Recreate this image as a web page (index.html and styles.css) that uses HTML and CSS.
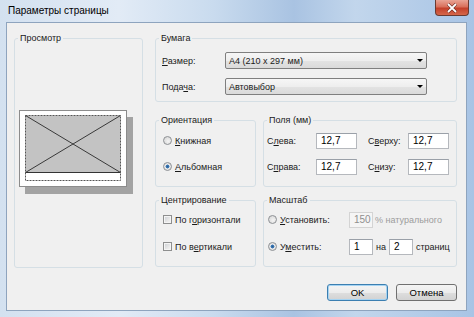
FILE: index.html
```html
<!DOCTYPE html>
<html>
<head>
  <meta charset="UTF-8">
  <title>Параметры страницы</title>
  <link rel="stylesheet" href="styles.css">
</head>
<body>
  <div class="window">
    <div class="titlebar">
      <span class="title">Параметры страницы</span>
      <span class="close">
        <svg width="12" height="10" viewBox="0 0 12 10">
          <path d="M2 1 L10 9 M10 1 L2 9" stroke="#5a2018" stroke-width="3"/>
          <path d="M2 1 L10 9 M10 1 L2 9" stroke="#fff" stroke-width="1.8"/>
        </svg>
      </span>
    </div>

    <div class="client">
      <div class="main">
        <fieldset class="group preview">
          <legend>Просмотр</legend>
          <div class="preview-body">
            <svg width="116" height="84" viewBox="0 0 116 84">
              <rect x="6" y="7" width="108" height="77" fill="#a3a3a3"/>
              <rect x="0.5" y="0.5" width="107" height="76" fill="#fff" stroke="#8c8c8c"/>
              <rect x="6.5" y="5.5" width="95" height="57" fill="#c3c3c3"/>
              <path d="M6.5 62.5 H101.5" stroke="#333"/>
              <path d="M6.5 5.5 L101.5 62.5 M101.5 5.5 L6.5 62.5" stroke="#3a3a3a"/>
              <rect x="6.5" y="5.5" width="95" height="65" fill="none" stroke="#555" stroke-dasharray="2 1"/>
            </svg>
          </div>
        </fieldset>

        <div class="right">
          <fieldset class="group paper">
            <legend>Бумага</legend>
            <div class="paper-body">
              <div class="field-row">
                <span class="label"><u>Р</u>азмер:</span>
                <div class="combo">A4 (210 x 297 мм)</div>
              </div>
              <div class="field-row">
                <span class="label">Пода<u>ч</u>а:</span>
                <div class="combo">Автовыбор</div>
              </div>
            </div>
          </fieldset>

          <div class="pair top-pair">
            <fieldset class="group narrow">
              <legend>Ориентация</legend>
              <div class="opt-body">
                <div class="opt-row"><span class="radio"></span><span><u>К</u>нижная</span></div>
                <div class="opt-row"><span class="radio checked"></span><span><u>А</u>льбомная</span></div>
              </div>
            </fieldset>
            <fieldset class="group wide">
              <legend>Поля (мм)</legend>
              <div class="margins-body">
                <span>С<u>л</u>ева:</span>
                <input class="edit" type="text" value="12,7">
                <span>С<u>в</u>ерху:</span>
                <input class="edit" type="text" value="12,7">
                <span>С<u>п</u>рава:</span>
                <input class="edit" type="text" value="12,7">
                <span>С<u>н</u>изу:</span>
                <input class="edit" type="text" value="12,7">
              </div>
            </fieldset>
          </div>

          <div class="pair bottom-pair">
            <fieldset class="group narrow">
              <legend>Центрирование</legend>
              <div class="opt-body center-body">
                <div class="opt-row"><span class="check"></span><span>По г<u>о</u>ризонтали</span></div>
                <div class="opt-row"><span class="check"></span><span>По в<u>е</u>ртикали</span></div>
              </div>
            </fieldset>
            <fieldset class="group wide">
              <legend>Масштаб</legend>
              <div class="scale-body">
                <div class="opt-row">
                  <span class="scale-label"><span class="radio"></span><span><u>У</u>становить:</span></span>
                  <input class="edit small" type="text" value="150" disabled>
                  <span class="muted">% натурального</span>
                </div>
                <div class="opt-row">
                  <span class="scale-label"><span class="radio checked"></span><span>У<u>м</u>естить:</span></span>
                  <input class="edit small" type="text" value="1">
                  <span class="word">на</span>
                  <input class="edit small" type="text" value="2">
                  <span class="word">страниц</span>
                </div>
              </div>
            </fieldset>
          </div>
        </div>
      </div>

      <div class="buttons">
        <button class="btn default">OK</button>
        <button class="btn">Отмена</button>
      </div>
    </div>
  </div>
</body>
</html>
```

FILE: styles.css
```css
/* Windows 7 style dialog, scaled down */
body {
  margin: 0;
  font-family: "Liberation Sans", Arial, sans-serif;
  font-size: 9px;
  color: #1a1a1a;
}
.window {
  width: 474px;
  height: 317px;
  box-sizing: border-box;
  padding: 0 7px 6px 6px;
  display: flex;
  flex-direction: column;
  background: linear-gradient(90deg, #d3e1f0 0%, #e2ebf6 25%, #c9dbee 45%, #a9c3e2 62%, #c2d6ec 75%, #a8c4e5 100%);
}
.titlebar {
  height: 22px;
  display: flex;
  align-items: flex-start;
}
.title {
  margin: 5px 0 0 2px;
  font-size: 10px;
  color: #000;
}
.close {
  margin-left: auto;
  margin-right: -2px;
  width: 34px;
  height: 16px;
  box-sizing: border-box;
  border: 1px solid #6b3a30;
  border-top: none;
  border-radius: 0 0 4px 4px;
  background: linear-gradient(#e9a495 0%, #d9705b 45%, #c4402a 55%, #d5674a 100%);
  display: flex;
  align-items: center;
  justify-content: center;
}
.client {
  flex: 1;
  background: #f0f0f0;
  border: 1px solid #8ea4be;
  padding: 8px 9px 9px 7px;
  display: flex;
  flex-direction: column;
}
.main {
  display: flex;
  gap: 12px;
  height: 237px;
}
/* Group boxes */
.group {
  margin: 0;
  padding: 0;
  min-width: 0;
  border: 1px solid #d5dfe5;
  border-radius: 3px;
}
.group legend {
  padding: 0 2px;
  margin-left: 3px;
  line-height: 14px;
}
.preview {
  width: 129px;
  box-sizing: border-box;
}
.preview-body {
  padding: 65px 0 0 4px;
}
.preview-body svg {
  display: block;
}
.right {
  width: 302px;
  display: flex;
  flex-direction: column;
}
.paper-body {
  padding: 7px 0 6px 6px;
  display: flex;
  flex-direction: column;
  gap: 9px;
}
.field-row {
  display: flex;
  align-items: center;
  height: 17px;
}
.label {
  width: 63px;
}
.combo {
  width: 202px;
  height: 17px;
  box-sizing: border-box;
  border: 1px solid #7f7f7f;
  border-radius: 2px;
  background: linear-gradient(#f6f6f6 0%, #eeeeee 50%, #e3e3e3 51%, #dadada 100%);
  display: flex;
  align-items: center;
  padding-left: 3px;
}
.combo::after {
  content: "";
  margin-left: auto;
  margin-right: 3px;
  border-left: 3px solid transparent;
  border-right: 3px solid transparent;
  border-top: 3px solid #000;
}
.pair {
  display: flex;
  gap: 7px;
}
.top-pair {
  margin-top: 11px;
}
.bottom-pair {
  margin-top: 6px;
}
.narrow {
  width: 101px;
  box-sizing: border-box;
}
.wide {
  flex: 1;
}
.opt-body {
  padding: 5px 0 11px 7px;
  display: flex;
  flex-direction: column;
  gap: 9px;
}
.center-body {
  padding-top: 4px;
  gap: 10px;
}
.opt-row {
  display: flex;
  align-items: center;
  height: 17px;
  gap: 3px;
}
.radio {
  width: 9px;
  height: 9px;
  box-sizing: border-box;
  border-radius: 50%;
  border: 1px solid #8d9094;
  background: radial-gradient(circle at 60% 60%, #f4f4f4 0%, #dcdcdc 70%, #cfcfcf 100%);
  flex: none;
}
.radio.checked {
  background: radial-gradient(circle, #2a5c8f 0%, #3f7fbf 35%, #e8e8e8 45%, #dadada 100%);
}
.check {
  width: 9px;
  height: 9px;
  box-sizing: border-box;
  border: 1px solid #8e8f8f;
  background: linear-gradient(135deg, #c9cdd2 0%, #e8e8e8 60%, #f6f6f6 100%);
  box-shadow: inset 0 0 0 1px #f4f4f4;
  flex: none;
}
.margins-body {
  padding: 5px 0 11px 3px;
  display: grid;
  grid-template-columns: 49px 52px 40px 41px;
  grid-auto-rows: 17px;
  row-gap: 9px;
  align-items: center;
}
.edit {
  width: 41px;
  height: 16px;
  box-sizing: border-box;
  margin: 0;
  border: 1px solid #b5b8bd;
  border-top-color: #9aa0a8;
  background: #fff;
  font-family: inherit;
  font-size: 10px;
  padding: 0 0 0 4px;
  color: #000;
}
.edit.small {
  width: 24px;
}
.edit:disabled {
  background: #f5f5f5;
  border-color: #d4d4d4;
  color: #8f8f8f;
}
.scale-body {
  padding: 4px 0 11px 4px;
  display: flex;
  flex-direction: column;
  gap: 10px;
}
.scale-label {
  width: 78px;
  display: flex;
  align-items: center;
  gap: 3px;
}
.muted {
  color: #9c9c9c;
  margin-left: -1px;
}
.word {
  margin: 0;
}
.buttons {
  margin-top: 16px;
  display: flex;
  justify-content: flex-end;
  gap: 8px;
}
.btn {
  width: 61px;
  height: 17px;
  margin: 0;
  padding: 0;
  border: 1px solid #707070;
  border-radius: 3px;
  background: linear-gradient(#f4f4f4 0%, #ececec 50%, #dedede 51%, #d2d2d2 100%);
  font-family: inherit;
  font-size: 9.5px;
  color: #000;
}
.btn.default {
  border-color: #3c7fb1;
  box-shadow: inset 0 0 0 1px #a5d3f2;
}
```
